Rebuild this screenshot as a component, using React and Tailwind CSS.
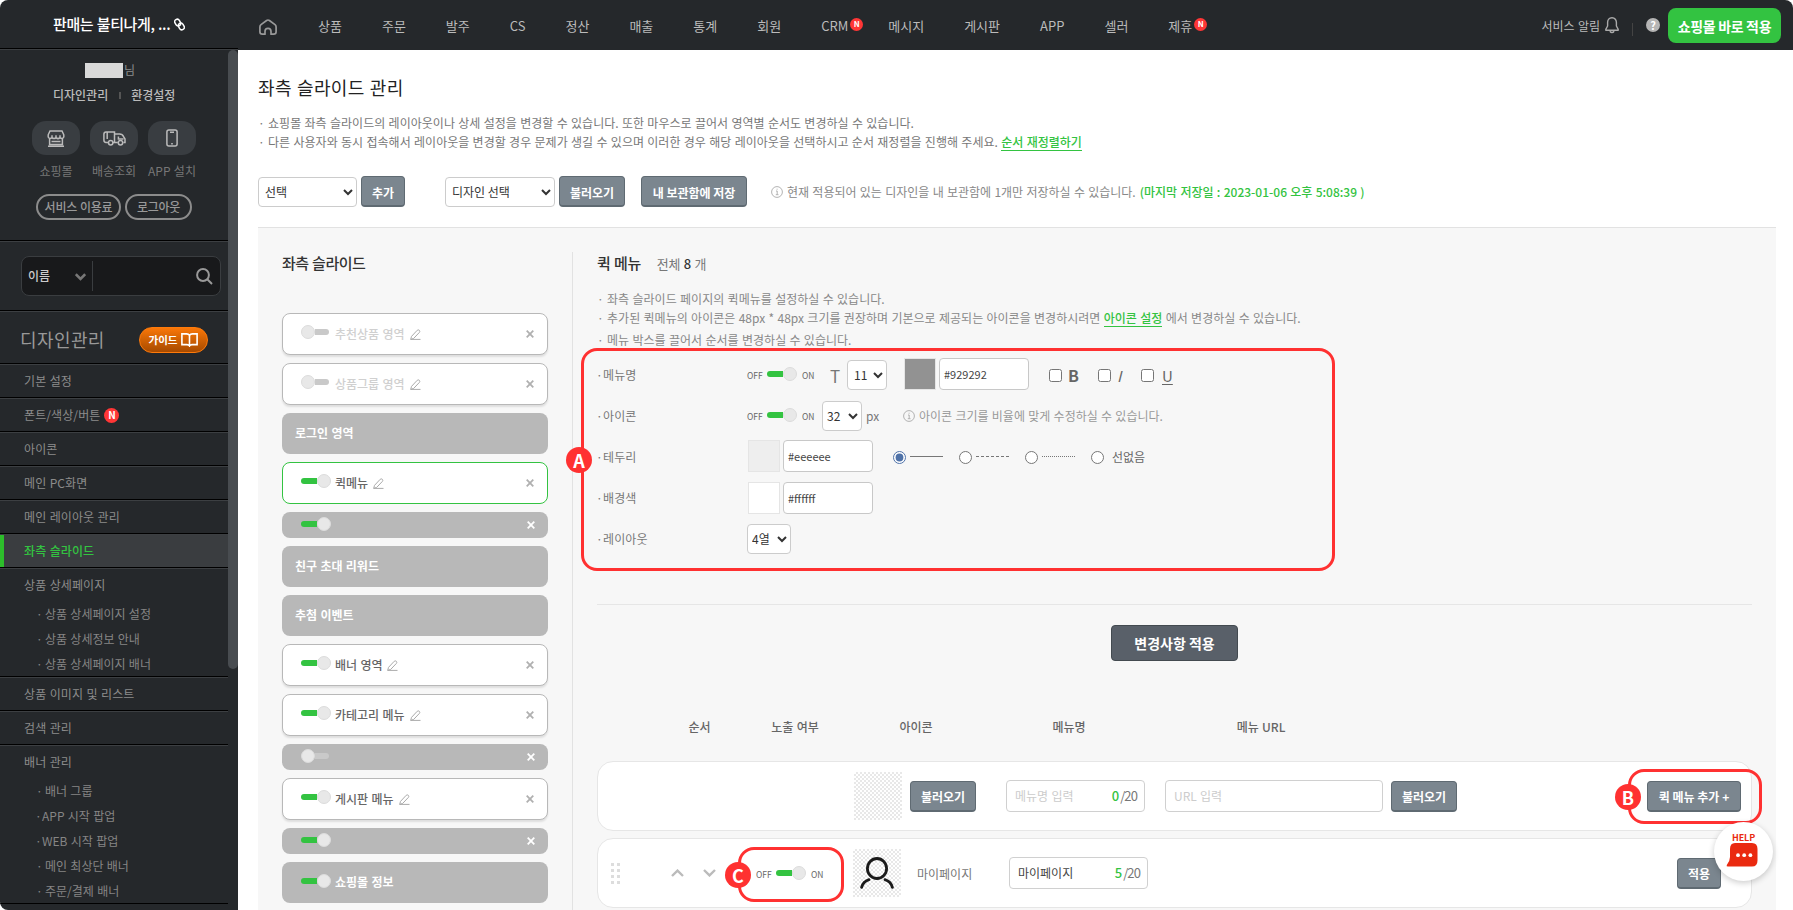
import clsx from "clsx";

const topMenus = [
  { name: "상품" },
  { name: "주문" },
  { name: "발주" },
  { name: "CS" },
  { name: "정산" },
  { name: "매출" },
  { name: "통계" },
  { name: "회원" },
  { name: "CRM", isNew: true },
  { name: "메시지" },
  { name: "게시판" },
  { name: "APP" },
  { name: "셀러" },
  { name: "제휴", isNew: true },
];

const sideMenus = [
  { name: "기본 설정" },
  { name: "폰트/색상/버튼", isNew: true },
  { name: "아이콘" },
  { name: "메인 PC화면" },
  { name: "메인 레이아웃 관리" },
  { name: "좌측 슬라이드", active: true },
  {
    name: "상품 상세페이지",
    children: ["상품 상세페이지 설정", "상품 상세정보 안내", "상품 상세페이지 배너"],
  },
  { name: "상품 이미지 및 리스트" },
  { name: "검색 관리" },
  {
    name: "배너 관리",
    children: ["배너 그룹", "APP 시작 팝업", "WEB 시작 팝업", "메인 최상단 배너", "주문/결제 배너"],
  },
];

const slideAreas = [
  { type: "card", name: "추천상품 영역", on: false },
  { type: "card", name: "상품그룹 영역", on: false },
  { type: "fixed", name: "로그인 영역" },
  { type: "card", name: "퀵메뉴", on: true, selected: true },
  { type: "thin", on: true },
  { type: "fixed", name: "친구 초대 리워드" },
  { type: "fixed", name: "추첨 이벤트" },
  { type: "card", name: "배너 영역", on: true },
  { type: "card", name: "카테고리 메뉴", on: true },
  { type: "thin", on: false },
  { type: "card", name: "게시판 메뉴", on: true },
  { type: "thin", on: true },
  { type: "fixed", name: "쇼핑몰 정보", on: true },
];

function NewBadge({ className }) {
  return (
    <span
      className={clsx(
        "flex items-center justify-center rounded-full bg-[#ff3636] font-bold text-white",
        className
      )}
    >
      N
    </span>
  );
}

function Toggle({ on }) {
  return on ? (
    <span className="flex w-[30px] shrink-0 items-center">
      <span className="h-1.5 w-4 rounded-l-full bg-[#33c341]" />
      <span className="size-3.5 rounded-full border border-[#dcdcdc] bg-[#e8e8e8]" />
    </span>
  ) : (
    <span className="flex w-[30px] shrink-0 items-center">
      <span className="size-3.5 rounded-full border border-[#dcdcdc] bg-[#e8e8e8]" />
      <span className="h-1.5 w-3.5 rounded-r-full bg-[#c9c9c9]" />
    </span>
  );
}

function OnOff({ className }) {
  return (
    <span className={clsx("flex items-center text-[8.5px] text-[#666]", className)}>
      <span className="w-5 pt-[3px]">OFF</span>
      <Toggle on />
      <span className="pt-[3px] pl-[5px]">ON</span>
    </span>
  );
}

function PencilIcon() {
  return (
    <svg width="11" height="11" viewBox="0 0 11 11" fill="none" stroke="#aaa" strokeWidth="1">
      <path d="M.7 10.4 1.5 7.4 7.2 1.3Q8.2.3 9.3 1.3 10.3 2.4 9.4 3.4L3.7 9.4.7 10.4H10.5" strokeLinejoin="round" />
    </svg>
  );
}

function CloseIcon({ color }) {
  return (
    <svg width="8" height="8" viewBox="0 0 8 8" stroke={color} strokeWidth="1.8">
      <path d="M.7.7 7.3 7.3M7.3.7.7 7.3" />
    </svg>
  );
}

function InfoIcon() {
  return (
    <svg width="12" height="12" viewBox="0 0 12 12" fill="none" stroke="#aaa" strokeWidth="0.9">
      <circle cx="6" cy="6" r="5.4" />
      <path d="M5 5h1.2v3.6M4.8 8.7h2.7M5.6 3.2h1" />
    </svg>
  );
}

function GrayButton({ children, className }) {
  return (
    <button
      type="button"
      className={clsx(
        "flex h-[31px] shrink-0 items-center justify-center rounded border border-b-2 border-[#5f6a72] bg-[#7b868f] pt-[3px] text-xs leading-none font-bold whitespace-nowrap text-white",
        className
      )}
    >
      {children}
    </button>
  );
}

function Select({ value, className }) {
  return (
    <select
      className={clsx("h-[30px] shrink-0 rounded border border-[#ccc] bg-white text-xs text-[#333]", className)}
      defaultValue={value}
    >
      <option>{value}</option>
    </select>
  );
}

function ColorField({ color, className }) {
  return (
    <span className={clsx("flex shrink-0 items-center gap-[3px]", className)}>
      <span className="size-8 border border-[#e5e5e5]" style={{ backgroundColor: color }} />
      <span className="flex h-8 w-[90px] items-center rounded border border-[#c8c8c8] bg-white pt-0.5 pl-1 text-[11px] text-[#444]">
        {color}
      </span>
    </span>
  );
}

function Checker({ children }) {
  return (
    <span className="flex size-12 shrink-0 items-center justify-center bg-[repeating-conic-gradient(#e8e8e8_0_25%,#fff_0_50%)] bg-[length:4px_4px]">
      {children}
    </span>
  );
}

function Mark({ children, className }) {
  return (
    <span
      className={clsx(
        "absolute flex size-[26px] items-center justify-center rounded-full bg-[#ff3131] text-[18px] leading-none font-bold text-white",
        className
      )}
    >
      {children}
    </span>
  );
}

function TopBar() {
  return (
    <header className="flex h-[50px] shrink-0 bg-[#25282b] text-[#bbb]">
      <div className="flex w-[238px] items-center border-b border-[#3c3f42] pl-[53px] text-[15px] font-medium tracking-[-0.4px] text-white shadow-[inset_0_-1px_0_#000]">
        판매는 불티나게, ...
        <svg className="ml-1" width="11" height="13" viewBox="0 0 10 12" fill="none" stroke="#fff" strokeWidth="1.4">
          <rect x="1" y="1" width="4.6" height="6.4" rx="2.3" transform="rotate(-30 3.3 4.2)" />
          <rect x="4.4" y="4.6" width="4.6" height="6.4" rx="2.3" transform="rotate(-30 6.7 7.8)" />
        </svg>
      </div>
      <nav className="flex flex-1 items-center pl-[21px] text-[13px]">
        <svg className="mt-1" width="18" height="17" viewBox="0 0 18 17" fill="none" stroke="#999" strokeWidth="1.7" strokeLinejoin="round">
          <path d="M6 15.2V12.4a3 3 0 0 1 6 0V15.2H14.6Q17.1 15.2 17.1 12.8V7.9Q17.1 6.5 16 5.6L10.4 1.5Q9 .5 7.6 1.5L2 5.6Q.9 6.5.9 7.9V12.8Q.9 15.2 3.4 15.2Z" />
        </svg>
        <ul className="ml-[41px] flex gap-10 pt-px">
          {topMenus.map((menu) => (
            <li key={menu.name} className="relative">
              {menu.name}
              {menu.isNew && <NewBadge className="absolute top-0.5 left-full ml-0.5 size-[13px] text-[8px]" />}
            </li>
          ))}
        </ul>
      </nav>
      <div className="flex items-center pr-3 text-xs">
        <span className="pt-px">서비스 알림</span>
        <svg className="ml-[5px]" width="14" height="17" viewBox="0 0 14 17" fill="none" stroke="#aaa" strokeWidth="1.4" strokeLinejoin="round">
          <path d="M7 .8C4 .8 2.6 3 2.6 5.6V9L.8 12.4V13.2H13.2V12.4L11.4 9V5.6C11.4 3 10 .8 7 .8ZM4.8 14.2Q7 16.8 9.2 14.2" />
        </svg>
        <span className="mt-2 ml-[13px] h-[13px] w-px bg-[#444]" />
        <span className="ml-[13px] flex size-3.5 items-center justify-center rounded-full bg-[#b5b5b5] text-[11px] leading-none font-bold text-white">
          ?
        </span>
        <button
          type="button"
          className="ml-2 flex h-[35px] w-[113px] items-center justify-center rounded-lg bg-[#33c341] pt-0.5 text-sm leading-none font-bold tracking-[-0.35px] text-white"
        >
          쇼핑몰 바로 적용
        </button>
      </div>
    </header>
  );
}

function QuickLink({ label, children }) {
  return (
    <div className="flex w-[58px] flex-col items-center">
      <span className="flex h-[34px] w-12 items-center justify-center rounded-[14px] bg-[#393d41]">{children}</span>
      <span className="mt-1.5 text-xs leading-5 whitespace-nowrap text-[#777]">{label}</span>
    </div>
  );
}

function Sidebar() {
  return (
    <aside className="flex w-[238px] shrink-0 bg-[#25282b]">
      <div className="w-[228px] text-xs text-[#8c8c8c]">
        <section className="flex h-[191px] flex-col border-b border-black">
          <div className="mt-[11px] flex h-[18px] items-center gap-px pl-[85px]">
            <span className="h-[15px] w-[38px] bg-[#d9d9d9]" />님
          </div>
          <div className="mt-[7px] flex h-[18px] items-center pl-[53px] font-medium text-[#bbb]">
            디자인관리
            <span className="mr-[10px] ml-[11px] h-[7px] w-0.5 bg-[#555]" />
            환경설정
          </div>
          <div className="mt-[17px] flex pl-[27px]">
            <QuickLink label="쇼핑몰">
              <svg width="18" height="17" viewBox="0 0 18 17" fill="none" stroke="#bbb" strokeWidth="1.5">
                <path d="M3 .9H15L16.8 4.8V7Q15.5 9.6 13 7.6 11 9.6 9 7.6 7 9.6 5 7.6 2.5 9.6 1.2 7V4.8ZM2.6 8.6V14.5H15.4V8.6M1 16.2H17M4.5 11.6H13.5M5 5.2V7M9 5.2V7M13 5.2V7" />
              </svg>
            </QuickLink>
            <QuickLink label="배송조회">
              <svg width="23" height="15" viewBox="0 0 23 15" fill="none" stroke="#bbb" strokeWidth="1.5">
                <path d="M5.5 11.4H3Q.9 11.4.9 9V3.3Q.9.9 3 .9H11.5V11.4H10M4.2.9V8M11.5 2.9H16.5Q19.5 2.9 20.6 5.6L22 8V11.4H20.4M11.5 11.4H14.8M15.4 5.6V8H20.5" />
                <circle cx="7.7" cy="11.8" r="2.2" />
                <circle cx="17.5" cy="11.8" r="2.2" />
              </svg>
            </QuickLink>
            <QuickLink label="APP 설치">
              <svg width="12" height="18" viewBox="0 0 12 18" fill="none" stroke="#bbb" strokeWidth="1.5">
                <rect x="0.9" y="0.9" width="10.2" height="16.2" rx="2" />
                <path d="M4 3.2H8M5.2 14.8H6.8" />
              </svg>
            </QuickLink>
          </div>
          <div className="mt-[13px] flex gap-1 pl-9 font-medium tracking-[-0.25px] text-[#999]">
            <span className="flex h-[26px] w-[85px] items-center justify-center rounded-full border-2 border-[#8c8c8c] leading-none">
              서비스 이용료
            </span>
            <span className="flex h-[26px] w-[67px] items-center justify-center rounded-full border-2 border-[#8c8c8c] leading-none">
              로그아웃
            </span>
          </div>
        </section>
        <section className="h-[70px] border-t border-b border-t-[#3c3f42] border-b-black pt-3.5 pl-[21px]">
          <div className="flex h-10 w-[200px] items-center rounded-lg border border-[#3a3d40] bg-[#18191b] pr-[7px] pl-1.5">
            <span className="w-[47px] font-medium text-[#ccc]">이름</span>
            <svg className="mt-0.5" width="11" height="8" viewBox="0 0 11 8" fill="none" stroke="#777" strokeWidth="2.6">
              <path d="M.8 1.2 5.5 6 10.2 1.2" />
            </svg>
            <span className="ml-1.5 h-[30px] w-px bg-[#3a3d40]" />
            <svg className="ml-auto" width="17" height="17" viewBox="0 0 17 17" fill="none" stroke="#999" strokeWidth="2">
              <circle cx="7" cy="7" r="5.9" />
              <path d="M11.3 11.3 16 16" />
            </svg>
          </div>
        </section>
        <section className="flex h-[53px] items-center justify-between border-t border-b border-t-[#3c3f42] border-b-black pt-1 pr-5 pl-5">
          <h2 className="pb-0.5 text-lg tracking-[0.4px] text-[#999]">디자인관리</h2>
          <span className="flex h-[26px] w-[69px] items-center justify-center gap-1 rounded-full border-[1.5px] border-[#ff7a0a] bg-linear-to-b from-[#f97709] to-[#a84b00] text-[10.5px] font-bold text-white">
            가이드
            <svg width="17" height="14" viewBox="0 0 17 14" fill="none" stroke="#fff" strokeWidth="1.6">
              <path d="M8.5 2.4Q7.6.9 5.6.9H.9V11.6H6Q7.8 11.6 8.5 13 9.2 11.6 11 11.6H16.1V.9H11.4Q9.4.9 8.5 2.4V12.6" />
            </svg>
          </span>
        </section>
        <ul>
          {sideMenus.map((menu) => (
            <li
              key={menu.name}
              className={clsx(
                "border-t border-b border-t-[#3c3f42] border-b-black",
                menu.active && "bg-[#3a3d40] font-medium text-[#33c341] shadow-[inset_4px_0_0_#2dbd2b]"
              )}
            >
              <div className="flex h-8 items-center pl-6 tracking-[0.1px]">
                {menu.name}
                {menu.isNew && <NewBadge className="ml-1 size-[15px] text-[10px]" />}
              </div>
              {menu.children && (
                <ul>
                  {menu.children.map((child) => (
                    <li key={child} className="flex h-[25px] items-center pl-9 text-[#858585]">
                      <span className={/^[A-Z]/.test(child) ? "-ml-px w-[7px]" : "w-[9px]"}>·</span>
                      {child}
                    </li>
                  ))}
                </ul>
              )}
            </li>
          ))}
        </ul>
      </div>
      <div className="h-[619px] w-2.5 rounded-full bg-[#484c50]" />
    </aside>
  );
}

function SlideArea({ area }) {
  if (area.type === "thin") {
    return (
      <li className="flex h-[26px] items-center justify-between rounded-lg bg-[#b8b8b8] pr-[13px] pl-[19px]">
        <span className="pb-[3px]">
          <Toggle on={area.on} />
        </span>
        <CloseIcon color="#fff" />
      </li>
    );
  }
  if (area.type === "fixed") {
    return (
      <li
        className={clsx(
          "flex h-[41px] items-center rounded-lg bg-[#b8b8b8] pb-0.5 text-xs font-bold text-white",
          area.on ? "gap-1 pl-[19px]" : "pl-[13px]"
        )}
      >
        {area.on && (
          <span className="pb-px">
            <Toggle on />
          </span>
        )}
        {area.name}
      </li>
    );
  }
  return (
    <li
      className={clsx(
        "flex h-[42px] items-center rounded-lg border bg-white pr-[13px] pl-[18px] text-xs",
        area.selected ? "border-[#33c341]" : "border-[#b8b8b8] shadow-[0_2px_2px_#0000001a]"
      )}
    >
      <span className="mr-1 pb-1">
        <Toggle on={area.on} />
      </span>
      <span className={clsx("mr-[5px] pb-px font-medium", area.on ? "text-[#666]" : "text-[#d0d0d0]")}>
        {area.name}
      </span>
      <PencilIcon />
      <span className="ml-auto">
        <CloseIcon color="#b0b0b0" />
      </span>
    </li>
  );
}

function SettingRow({ label, children }) {
  return (
    <div className="flex h-[41px] items-center text-xs">
      <span className="flex w-[150px] shrink-0 text-[#777]">
        <span className="-ml-px w-[7px]">·</span>
        <span className="tracking-[0.1px]">{label}</span>
      </span>
      {children}
    </div>
  );
}

function Settings() {
  return (
    <div className="relative mt-[5px] text-[#666]">
      <SettingRow label="메뉴명">
        <OnOff className="w-[83px]" />
        <span className="w-[17px] pt-px text-[17px] leading-none text-[#777]">T</span>
        <Select value="11" className="w-10 pl-0.5" />
        <ColorField color="#929292" className="mb-0.5 ml-[17px]" />
        <input type="checkbox" className="mt-0.5 ml-5 size-[13px]" />
        <b className="ml-1.5 w-[30px] pt-px text-base leading-none">B</b>
        <input type="checkbox" className="mt-0.5 size-[13px]" />
        <i className="ml-1.5 w-6 pt-px text-[15px] leading-none">I</i>
        <input type="checkbox" className="mt-0.5 size-[13px]" />
        <u className="ml-2 pt-px text-[15px] leading-none underline-offset-2">U</u>
      </SettingRow>
      <SettingRow label="아이콘">
        <OnOff className="w-[75px]" />
        <Select value="32" className="w-10" />
        <span className="ml-1 w-[37px] pt-px text-[#777]">px</span>
        <InfoIcon />
        <span className="ml-1 text-[#999]">아이콘 크기를 비율에 맞게 수정하실 수 있습니다.</span>
      </SettingRow>
      <SettingRow label="테두리">
        <ColorField color="#eeeeee" className="mb-0.5 ml-px" />
        <div className="ml-5 flex items-center pt-px">
          <input type="radio" name="line" defaultChecked className="size-[13px] accent-[#4f72a8]" />
          <span className="mr-4 mb-0.5 ml-1 w-[33px] border-t border-[#777]" />
          <input type="radio" name="line" className="size-[13px]" />
          <span className="mr-4 mb-0.5 ml-1 w-[33px] border-t border-dashed border-[#777]" />
          <input type="radio" name="line" className="size-[13px]" />
          <span className="mr-4 mb-0.5 ml-1 w-[33px] border-t border-dotted border-[#777]" />
          <input type="radio" name="line" className="size-[13px]" />
          <span className="ml-2">선없음</span>
        </div>
      </SettingRow>
      <SettingRow label="배경색">
        <ColorField color="#ffffff" className="ml-px" />
      </SettingRow>
      <SettingRow label="레이아웃">
        <Select value="4열" className="w-11" />
      </SettingRow>
      <div className="absolute -top-1.5 -left-4 h-[223px] w-[754px] rounded-2xl border-3 border-[#ff3131]" />
      <Mark className="top-[93px] -left-[31px]">A</Mark>
    </div>
  );
}

function CountInput({ value, placeholder, count }) {
  return (
    <span className="flex h-8 w-[139px] shrink-0 items-center justify-between rounded border border-[#d0d0d0] bg-white pr-[7px] pl-2 text-xs">
      <span className={value ? "text-[#444]" : "text-[#ccc]"}>{value || placeholder}</span>
      <span className="text-[13px] tracking-[-0.9px] text-[#777]">
        <span className="mr-0.5 font-medium text-[#33c341]">{count}</span>/20
      </span>
    </span>
  );
}

function QuickMenuTable() {
  return (
    <div className="flex flex-col">
      <div className="flex pl-[55px] text-xs leading-5 font-medium text-[#666]">
        <span className="w-[95px] text-center">순서</span>
        <span className="w-24 text-center">노출 여부</span>
        <span className="w-[146px] text-center">아이콘</span>
        <span className="w-40 text-center">메뉴명</span>
        <span className="w-[224px] text-center">메뉴 URL</span>
      </div>
      <div className="relative mt-6 flex h-[70px] items-center rounded-2xl border border-[#e6e6e6] bg-white pr-2.5 pl-64">
        <Checker />
        <GrayButton className="ml-2 w-[66px]">불러오기</GrayButton>
        <span className="w-[30px]" />
        <CountInput placeholder="메뉴명 입력" count={0} />
        <span className="ml-5 flex h-8 w-[218px] items-center rounded border border-[#d0d0d0] pl-2 text-xs text-[#ccc]">
          URL 입력
        </span>
        <GrayButton className="ml-2 w-[66px]">불러오기</GrayButton>
        <GrayButton className="ml-auto w-[94px]">퀵 메뉴 추가 +</GrayButton>
        <div className="absolute top-[7px] -right-[11px] h-[55px] w-[134px] rounded-2xl border-3 border-[#ff3131]" />
        <Mark className="top-[22px] right-[110px]">B</Mark>
      </div>
      <div className="relative mt-[7px] flex h-[70px] items-center rounded-2xl border border-[#e6e6e6] bg-white pr-[30px] pl-[13px]">
        <span className="grid grid-cols-2 gap-[3px]">
          {[...Array(8)].map((_, i) => (
            <span key={i} className="size-[3px] bg-[#ddd]" />
          ))}
        </span>
        <svg className="ml-[51px]" width="13" height="8" viewBox="0 0 13 8" fill="none" stroke="#bbb" strokeWidth="2.4">
          <path d="M1 7 6.5 1.6 12 7" />
        </svg>
        <svg className="ml-[19px]" width="13" height="8" viewBox="0 0 13 8" fill="none" stroke="#bbb" strokeWidth="2.4">
          <path d="M1 1 6.5 6.4 12 1" />
        </svg>
        <OnOff className="ml-10 w-[97px]" />
        <Checker>
          <svg width="34" height="32" viewBox="0 0 34 32" fill="none" stroke="#1a1a1a" strokeWidth="2.8" strokeLinecap="round">
            <ellipse cx="17" cy="11.5" rx="9.6" ry="10" />
            <path d="M9 22.6Q3 24.6 1.6 30.4M25 22.6Q31 24.6 32.4 30.4" />
          </svg>
        </Checker>
        <span className="ml-4 w-[92px] pt-0.5 text-xs text-[#777]">마이페이지</span>
        <CountInput value="마이페이지" count={5} />
        <GrayButton className="ml-auto w-11">적용</GrayButton>
        <div className="absolute top-2 left-[140px] h-[55px] w-[106px] rounded-2xl border-3 border-[#ff3131]" />
        <Mark className="top-[23px] left-[127px]">C</Mark>
      </div>
    </div>
  );
}

function HelpButton() {
  return (
    <div className="absolute top-[822px] right-5 flex size-[59px] flex-col items-center rounded-full bg-white pt-[11px] shadow-[0_2px_6px_#0003]">
      <span className="text-[9px] leading-[10px] font-bold tracking-[-0.1px] text-[#ea2a10]">HELP</span>
      <svg className="mr-[3px]" width="32" height="24" viewBox="0 0 32 24">
        <path d="M9 0H26Q31.5 0 31.5 6V17.5Q31.5 23.5 26 23.5H2Q0 23.5 .8 22 4 18 4 14V6Q4 0 9 0Z" fill="#ea2a10" />
        <circle cx="12" cy="12.2" r="1.9" fill="#fff" />
        <circle cx="18.2" cy="12.2" r="1.9" fill="#fff" />
        <circle cx="24.4" cy="12.2" r="1.9" fill="#fff" />
      </svg>
    </div>
  );
}

export default function App() {
  return (
    <div className="relative flex h-[910px] w-[1793px] flex-col overflow-hidden rounded-t-lg rounded-bl-lg bg-white font-['Noto_Sans_CJK_KR','Noto_Sans',sans-serif] [word-spacing:0.6px]">
      <TopBar />
      <div className="flex min-h-0 flex-1">
        <Sidebar />
        <main className="flex min-w-0 flex-1 flex-col pr-[17px] pl-5">
          <h1 className="mt-6 text-lg leading-[26px] tracking-[0.4px] text-[#222]">좌측 슬라이드 관리</h1>
          <div className="mt-[13px] text-xs leading-[19px] tracking-[0.02px] text-[#777]">
            <p>· 쇼핑몰 좌측 슬라이드의 레이아웃이나 상세 설정을 변경할 수 있습니다. 또한 마우스로 끌어서 영역별 순서도 변경하실 수 있습니다.</p>
            <p>
              · 다른 사용자와 동시 접속해서 레이아웃을 변경할 경우 문제가 생길 수 있으며 이러한 경우 해당 레이아웃을 선택하시고 순서 재정렬을 진행해 주세요.{" "}
              <a className="border-b border-[#33c341] font-medium text-[#33c341]">순서 재정렬하기</a>
            </p>
          </div>
          <div className="mt-[25px] flex h-[31px] items-center text-xs">
            <Select value="선택" className="w-[99px] pl-0.5" />
            <GrayButton className="ml-1 w-11">추가</GrayButton>
            <Select value="디자인 선택" className="ml-10 w-[110px] pl-0.5" />
            <GrayButton className="ml-1 w-[66px]">불러오기</GrayButton>
            <GrayButton className="mr-6 ml-4 w-[106px]">내 보관함에 저장</GrayButton>
            <InfoIcon />
            <span className="ml-1 text-[#888]">현재 적용되어 있는 디자인을 내 보관함에 1개만 저장하실 수 있습니다.</span>
            <span className="ml-1 font-medium text-[#33c341]">(마지막 저장일 : 2023-01-06 오후 5:08:39 )</span>
          </div>
          <div className="mt-5 flex min-h-0 flex-1 border-t border-[#e2e2e2] bg-[#f7f7f7]">
            <section className="w-[290px] shrink-0 pl-6">
              <h2 className="mt-[25px] text-[15px] leading-5 font-medium tracking-[-0.5px] text-[#333]">좌측 슬라이드</h2>
              <ul className="mt-10 flex flex-col gap-2">
                {slideAreas.map((area, i) => (
                  <SlideArea key={i} area={area} />
                ))}
              </ul>
            </section>
            <section className="mt-6 ml-6 min-w-0 flex-1 border-l border-[#e2e2e2] pr-6 pl-6">
              <div className="mt-px flex h-5 items-center">
                <h2 className="text-[15px] font-medium tracking-[-0.4px] text-[#333]">퀵 메뉴</h2>
                <span className="ml-4 pt-0.5 text-[13px] tracking-[-0.15px] text-[#777]">
                  전체 <b className="font-medium text-[#333]">8</b> 개
                </span>
              </div>
              <div className="mt-4 text-xs leading-[19px] tracking-[0.02px] text-[#888]">
                <p>· 좌측 슬라이드 페이지의 퀵메뉴를 설정하실 수 있습니다.</p>
                <p>
                  · 추가된 퀵메뉴의 아이콘은 48px * 48px 크기를 권장하며 기본으로 제공되는 아이콘을 변경하시려면{" "}
                  <a className="border-b border-[#33c341] font-medium text-[#33c341]">아이콘 설정</a> 에서 변경하실 수 있습니다.
                </p>
                <p className="mt-[3px]">· 메뉴 박스를 끌어서 순서를 변경하실 수 있습니다.</p>
              </div>
              <Settings />
              <hr className="mt-[45px] border-[#e6e6e6]" />
              <button
                type="button"
                className="mx-auto mt-5 mb-14 flex h-9 w-[127px] items-center justify-center rounded border border-[#434a50] bg-[#596069] text-sm leading-none font-bold text-white"
              >
                변경사항 적용
              </button>
              <QuickMenuTable />
            </section>
          </div>
        </main>
      </div>
      <HelpButton />
    </div>
  );
}
